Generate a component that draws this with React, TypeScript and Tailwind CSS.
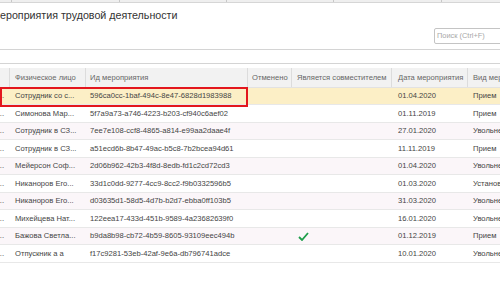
import React from "react";

type Row = { name: string; id: string; date: string; kind: string; check?: boolean };

const rows: Row[] = [
  { name: "Сотрудник со с...", id: "596ca0cc-1baf-494c-8e47-6828d1983988", date: "01.04.2020", kind: "Прием" },
  { name: "Симонова Мар...", id: "5f7a9a73-a746-4223-b203-cf940c6aef02", date: "01.11.2019", kind: "Прием" },
  { name: "Сотрудник в СЗ...", id: "7ee7e108-ccf8-4865-a814-e99aa2daae4f", date: "27.01.2020", kind: "Увольнение" },
  { name: "Сотрудник в СЗ...", id: "a51ecd6b-8b47-49ac-b5c8-7b2bcea94d61", date: "11.11.2019", kind: "Прием" },
  { name: "Мейерсон Соф...", id: "2d06b962-42b3-4f8d-8edb-fd1c2cd72cd3", date: "01.04.2020", kind: "Увольнение" },
  { name: "Никаноров Его...", id: "33d1c0dd-9277-4cc9-8cc2-f9b0332596b5", date: "01.03.2020", kind: "Установка" },
  { name: "Никаноров Его...", id: "d03635d1-58d5-4d7b-b2d7-ebba0ff103b5", date: "31.03.2020", kind: "Увольнение" },
  { name: "Михейцева Нат...", id: "122eea17-433d-451b-9589-4a23682639f0", date: "16.01.2020", kind: "Увольнение" },
  { name: "Бажова Светла...", id: "b9da8b98-cb72-4b59-8605-93109eec494b", date: "01.12.2019", kind: "Прием", check: true },
  { name: "Отпускник а а", id: "f17c9281-53eb-42af-9e6a-db796741adce", date: "10.01.2020", kind: "Увольнение" },
];

export default function App() {
  return (
    <div
      className="relative w-[500px] h-[300px] overflow-hidden bg-white text-[#444]"
      style={{ fontFamily: '"Liberation Sans", Arial, sans-serif' }}
    >
      {/* top strip */}
      <div className="flex h-[3px] bg-[#efefef] border-b border-[#d6d6d6]">
        <div className="w-[12px] border-r border-[#c8c8c8]" />
        <div className="w-[108px] border-r border-[#c8c8c8]" />
        <div className="w-[107px] border-r border-[#c8c8c8]" />
        <div className="w-[107px] border-r border-[#c8c8c8]" />
        <div className="w-[108px] border-r border-[#c8c8c8]" />
        <div className="flex-1" />
      </div>

      {/* title + search */}
      <div className="flex flex-col h-[46px]">
        <div className="mt-[6px] ml-[-9px] text-[10.7px] leading-[13px] text-[#333] whitespace-nowrap">
          Мероприятия трудовой деятельности
        </div>
        <div className="flex justify-end mt-[6px]">
          <div className="w-[72px] -mr-[6px] h-[16px] border border-[#c4c4c4] rounded-[2px] flex items-center pl-[2px] text-[7.4px] text-[#a8a8a8] whitespace-nowrap">
            Поиск (Ctrl+F)
          </div>
        </div>
      </div>

      {/* toolbar band */}
      <div className="h-[15px] border-t border-b border-[#d4d4d4]" />
      <div className="h-[4px]" />

      {/* table */}
      <div className="text-[7.6px]">
        <div className="flex h-[20px] bg-[#f2f2f2] border-b border-[#e2e2e2] text-[#666]">
          <div className="w-[10px] shrink-0 border-r border-[#dcdcdc]" />
          <div className="w-[76px] shrink-0 border-r border-[#dcdcdc] pl-[5px] flex items-center whitespace-nowrap">Физическое лицо</div>
          <div className="w-[162px] shrink-0 border-r border-[#dcdcdc] pl-[4px] flex items-center whitespace-nowrap">Ид мероприятия</div>
          <div className="w-[44px] shrink-0 border-r border-[#dcdcdc] pl-[4px] flex items-center whitespace-nowrap">Отменено</div>
          <div className="w-[100px] shrink-0 border-r border-[#dcdcdc] pl-[5px] flex items-center whitespace-nowrap">Является совместителем</div>
          <div className="w-[76px] shrink-0 border-r border-[#dcdcdc] pl-[6px] flex items-center whitespace-nowrap">Дата мероприятия</div>
          <div className="w-[80px] shrink-0 pl-[5px] flex items-center whitespace-nowrap">Вид мероприятия</div>
        </div>

        {rows.map((r, i) => {
          const bg = i === 0 ? "bg-[#fcefc6]" : i % 2 === 0 ? "bg-[#fbf6f9]" : "bg-white";
          const h = i % 2 === 0 ? "h-[17px]" : "h-[18px]";
          return (
            <div key={i} className={`flex ${h} ${bg} border-b border-[#e8e8e8] items-center whitespace-nowrap`}>
              <div className="w-[10px] shrink-0 overflow-hidden flex justify-end pr-[6px]">
                <span>Кадровое...</span>
              </div>
              <div className="w-[76px] shrink-0 pl-[5px] overflow-hidden">{r.name}</div>
              <div className="w-[162px] shrink-0 pl-[4px] overflow-hidden">{r.id}</div>
              <div className="w-[44px] shrink-0" />
              <div className="w-[100px] shrink-0 pl-[6px] flex items-center">
                {r.check && (
                  <svg width="11" height="9" viewBox="0 0 11 9">
                    <path d="M1 5 L4 8 L10 1" fill="none" stroke="#1e9e4a" strokeWidth="1.8" />
                  </svg>
                )}
              </div>
              <div className="w-[76px] shrink-0 pl-[6px]">{r.date}</div>
              <div className="w-[80px] shrink-0 pl-[5px] overflow-hidden">{r.kind}</div>
            </div>
          );
        })}
      </div>

      {/* selection frame */}
      <div className="absolute left-0 top-[87px] w-[248px] h-[20px] border-[2.5px] border-[#e3161d]" />
    </div>
  );
}
